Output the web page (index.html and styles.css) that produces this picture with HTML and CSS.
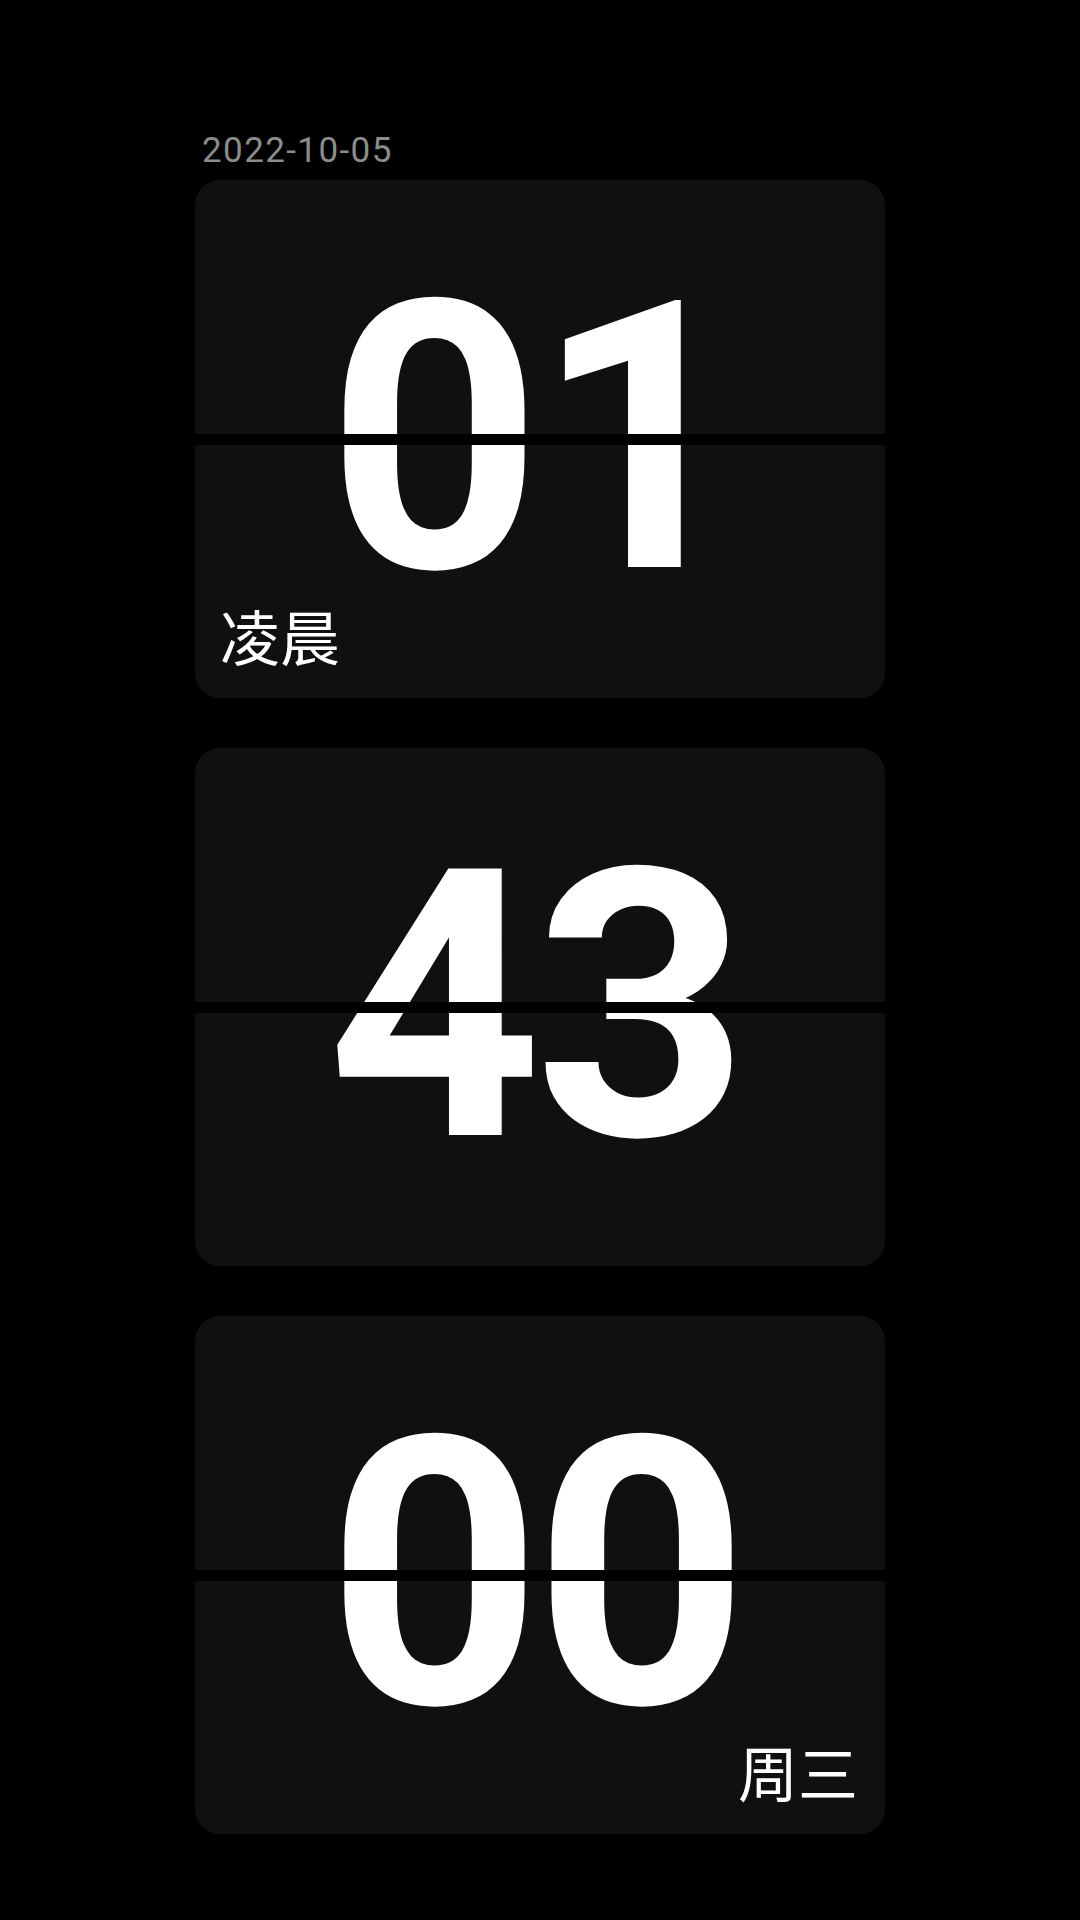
FILE: index.html
```html
<!DOCTYPE html>
<html lang="zh-CN">
<head>
<meta charset="utf-8">
<title>翻页时钟</title>
<link rel="stylesheet" href="styles.css">
</head>
<body>
<main class="clock">
  <div class="date">2022-10-05</div>
  <section class="card">
    <div class="digits">01</div>
    <div class="divider"></div>
    <div class="label label-start">凌晨</div>
  </section>
  <section class="card">
    <div class="digits">43</div>
    <div class="divider"></div>
  </section>
  <section class="card">
    <div class="digits">00</div>
    <div class="divider"></div>
    <div class="label label-end">周三</div>
  </section>
</main>
</body>
</html>
```

FILE: styles.css
```css
html, body {
  margin: 0;
  padding: 0;
  background: #000;
}

body {
  width: 1080px;
  height: 1920px;
  overflow: hidden;
  font-family: Roboto, "Noto Sans CJK SC", sans-serif;
}

.clock {
  width: 690px;
  margin: 0 auto;
  padding-top: 130px;
  display: flex;
  flex-direction: column;
}

.date {
  font-family: Roboto, sans-serif;
  font-size: 35px;
  line-height: 42px;
  height: 42px;
  color: #8c8c8c;
  letter-spacing: 1.4px;
  padding-left: 7px;
  margin-bottom: 8px;
}

.card {
  height: 518px;
  background: #101010;
  border-radius: 25px;
  display: grid;
  grid-template: 1fr / 1fr;
  overflow: hidden;
  margin-bottom: 50px;
}

.card > * {
  grid-area: 1 / 1;
}

.digits {
  align-self: center;
  justify-self: center;
  font-family: Roboto, sans-serif;
  font-weight: 700;
  font-size: 375px;
  line-height: 375px;
  letter-spacing: -8px;
  padding-right: 12px;
  color: #fff;
}

.divider {
  align-self: center;
  height: 11px;
  width: 100%;
  background: #000;
}

.label {
  align-self: end;
  font-family: "Noto Sans CJK SC", sans-serif;
  font-size: 60px;
  line-height: 60px;
  color: #fff;
  margin-bottom: 33px;
}

.label-start {
  justify-self: start;
  margin-left: 25px;
}

.label-end {
  justify-self: end;
  margin-right: 27px;
}
```
